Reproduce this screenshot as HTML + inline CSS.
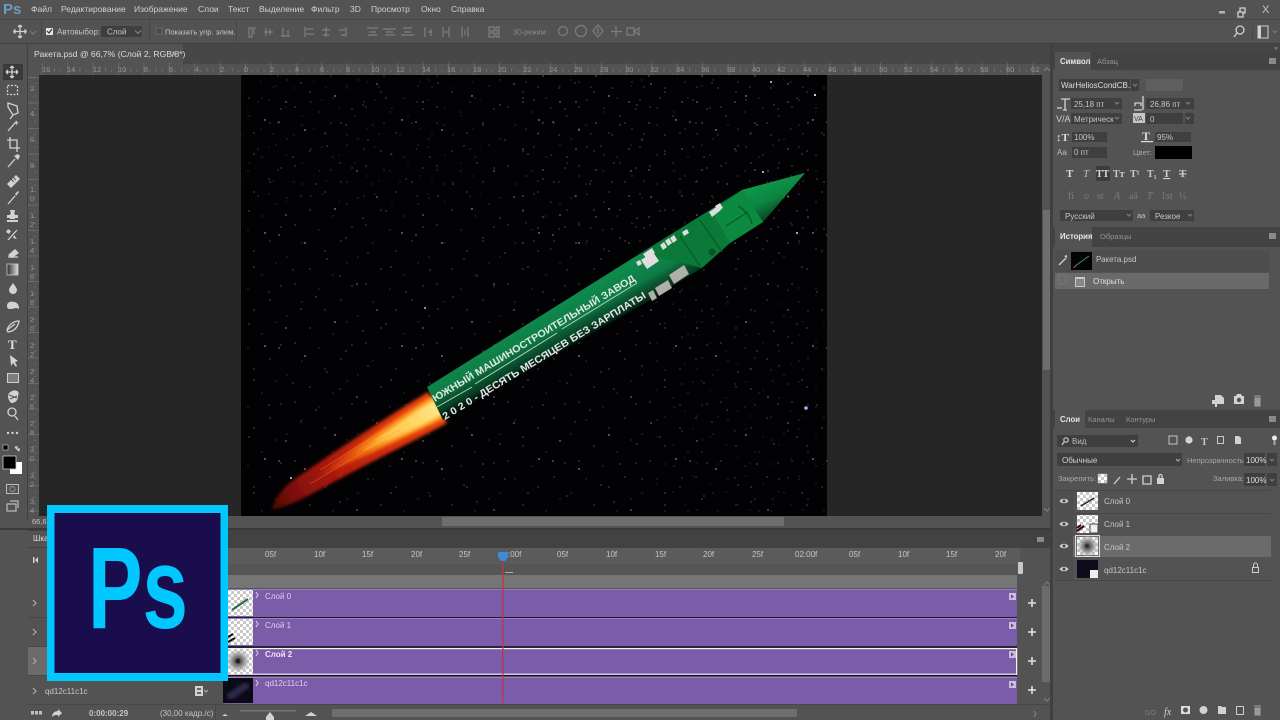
<!DOCTYPE html>
<html lang="ru"><head><meta charset="utf-8"><title>Photoshop</title>
<style>
html,body{margin:0;padding:0;background:#535353;width:1280px;height:720px;overflow:hidden}
svg{display:block;filter:blur(.35px)}
text{font-family:"Liberation Sans","Noto Sans CJK SC",sans-serif;font-size:8px;fill:#c6c6c6}
.m{font-size:8.5px;fill:#d0d0d0}
.d{fill:#8d8d8d;font-size:7.5px}
.r{fill:#949494;font-size:7.5px}
.w{fill:#e6e6e6}
.i{fill:none;stroke:#d2d2d2;stroke-width:1.3}
.f{fill:#d2d2d2;stroke:none}
.g{fill:none;stroke:#7e7e7e;stroke-width:1.2}
.b{fill:#3f3f3f}
</style></head><body>
<svg width="1280" height="720" viewBox="0 0 1280 720" xmlns="http://www.w3.org/2000/svg">
<defs>
<pattern id="s1" width="137" height="113" patternUnits="userSpaceOnUse">
<g fill="#c8c8d2"><circle cx="5" cy="9" r=".6"/><circle cx="19" cy="44" r=".45"/><circle cx="31" cy="17" r=".7"/><circle cx="42" cy="71" r=".5"/><circle cx="53" cy="33" r=".45"/><circle cx="61" cy="96" r=".7"/><circle cx="72" cy="12" r=".5"/><circle cx="83" cy="58" r=".6"/><circle cx="94" cy="27" r=".45"/><circle cx="103" cy="84" r=".6"/><circle cx="117" cy="41" r=".5"/><circle cx="128" cy="7" r=".7"/><circle cx="132" cy="66" r=".45"/><circle cx="12" cy="102" r=".6"/><circle cx="27" cy="83" r=".45"/><circle cx="89" cy="105" r=".5"/><circle cx="112" cy="98" r=".45"/><circle cx="66" cy="50" r=".45"/></g>
</pattern>
<pattern id="s2" width="71" height="59" patternUnits="userSpaceOnUse">
<g fill="#6f6f7c"><circle cx="3" cy="21" r=".5"/><circle cx="11" cy="48" r=".6"/><circle cx="18" cy="7" r=".5"/><circle cx="26" cy="33" r=".6"/><circle cx="35" cy="53" r=".5"/><circle cx="41" cy="15" r=".6"/><circle cx="49" cy="39" r=".5"/><circle cx="57" cy="5" r=".6"/><circle cx="63" cy="27" r=".5"/><circle cx="68" cy="50" r=".6"/></g>
</pattern>
<pattern id="s3" width="53" height="47" patternUnits="userSpaceOnUse">
<g fill="#9a9aa6"><circle cx="4" cy="6" r=".5"/><circle cx="13" cy="29" r=".6"/><circle cx="21" cy="14" r=".45"/><circle cx="29" cy="41" r=".55"/><circle cx="37" cy="22" r=".5"/><circle cx="46" cy="8" r=".6"/><circle cx="49" cy="35" r=".45"/><circle cx="8" cy="40" r=".5"/></g>
</pattern>
<pattern id="ch" width="6" height="6" patternUnits="userSpaceOnUse"><rect width="6" height="6" fill="#fff"/><rect width="3" height="3" fill="#c8c8c8"/><rect x="3" y="3" width="3" height="3" fill="#c8c8c8"/></pattern>
<pattern id="tk" width="25.4" height="12" patternUnits="userSpaceOnUse" x="245"><path d="M.5 1V12M12.7 8V12M6.35 10V12M19 10V12" stroke="#757575" stroke-width=".7"/></pattern>
<pattern id="tv" width="12" height="25.5" patternUnits="userSpaceOnUse" y="77"><path d="M1 .5H12M8 12.7H12M10 6.3H12M10 19H12" stroke="#757575" stroke-width=".7"/></pattern>
<linearGradient id="fl" gradientUnits="userSpaceOnUse" x1="440" y1="405" x2="272" y2="508"><stop offset="0" stop-color="#e8470c"/><stop offset=".3" stop-color="#d8320a"/><stop offset=".62" stop-color="#b01a08"/><stop offset=".88" stop-color="#7a0f07"/><stop offset="1" stop-color="#4a0805"/></linearGradient>
<linearGradient id="fm" gradientUnits="userSpaceOnUse" x1="440" y1="407" x2="300" y2="490"><stop offset="0" stop-color="#ffa020"/><stop offset=".5" stop-color="#f4700f"/><stop offset="1" stop-color="#d8320a" stop-opacity="0"/></linearGradient>
<linearGradient id="fc" gradientUnits="userSpaceOnUse" x1="440" y1="407" x2="345" y2="465"><stop offset="0" stop-color="#ffe888"/><stop offset=".55" stop-color="#ffc040"/><stop offset="1" stop-color="#f58a18" stop-opacity="0"/></linearGradient>
<linearGradient id="rk" gradientUnits="userSpaceOnUse" x1="528" y1="322" x2="548" y2="358"><stop offset="0" stop-color="#0f8a4c"/><stop offset=".48" stop-color="#0d7b46"/><stop offset=".62" stop-color="#0b5e36"/><stop offset=".85" stop-color="#083f25"/><stop offset="1" stop-color="#04160d"/></linearGradient>
<linearGradient id="ns" gradientUnits="userSpaceOnUse" x1="748" y1="186" x2="764" y2="222"><stop offset="0" stop-color="#0e9a4c"/><stop offset=".55" stop-color="#0c8440"/><stop offset="1" stop-color="#06401f"/></linearGradient>
<radialGradient id="sm"><stop offset="0" stop-color="#333"/><stop offset=".5" stop-color="#8a8a8a"/><stop offset="1" stop-color="#bbb" stop-opacity=".3"/></radialGradient>
<linearGradient id="gr"><stop offset="0" stop-color="#2b2b2b"/><stop offset="1" stop-color="#ddd"/></linearGradient>
<filter id="bl"><feGaussianBlur stdDeviation="1.6"/></filter>
<filter id="bl2"><feGaussianBlur stdDeviation="3"/></filter>
<filter id="sf"><feGaussianBlur stdDeviation=".35"/></filter>
</defs>

<rect width="1280" height="720" fill="#535353"/>

<!-- menu bar -->
<text x="3" y="14" style="font-size:15px;font-weight:bold;fill:#6f9bbd">Ps</text>
<text class="m" x="31" y="12">Файл</text><text class="m" x="61" y="12">Редактирование</text><text class="m" x="134" y="12">Изображение</text><text class="m" x="198" y="12">Слои</text><text class="m" x="228" y="12">Текст</text><text class="m" x="259" y="12">Выделение</text><text class="m" x="311" y="12">Фильтр</text><text class="m" x="350" y="12">3D</text><text class="m" x="371" y="12">Просмотр</text><text class="m" x="421" y="12">Окно</text><text class="m" x="451" y="12">Справка</text>
<rect x="1219" y="11" width="6" height="2.5" fill="#b5b5b5"/>
<path class="i" d="M1238 12h5v5h-5zM1240 12V8h5v5h-2" stroke-width="1"/>
<text x="1262" y="13" style="font-size:11px;fill:#c8c8c8">X</text>
<rect y="19" width="1280" height="1" fill="#484848"/>

<!-- options bar -->
<rect y="20" width="1280" height="24" fill="#535353"/>
<rect y="43" width="1280" height="1" fill="#3e3e3e"/>
<path class="i" d="M20 25v13M13.500 31.500h13M20 25l-2 2M20 25l2 2M20 38l-2-2M20 38l2-2M13.500 31.500l2-2M13.500 31.500l2 2M26.500 31.500l-2-2M26.500 31.500l-2 2"/>
<path class="g" d="M30 31l3 3 3-3"/>
<rect x="41" y="20" width="1" height="22" fill="#474747"/>
<rect x="46" y="28" width="7" height="7" fill="#e4e4e4"/><path d="M47 31l2 2 3-4" stroke="#333" fill="none" stroke-width="1.2"/>
<text x="57" y="34.500">Автовыбор:</text>
<rect x="101" y="26" width="41" height="11" class="b"/><text x="107" y="34.500">Слой</text><path class="g" d="M135 30.500l3 3 3-3"/>
<rect x="149" y="20" width="1" height="22" fill="#474747"/>
<rect x="156" y="28" width="6" height="6" fill="#4a4a4a" stroke="#666"/>
<text x="165" y="34.500" style="font-size:7.600px">Показать упр. элем.</text>
<rect x="236" y="20" width="1" height="22" fill="#474747"/>
<g class="g">
<path d="M248 28h8M249 29v8h3v-8M254 29v5"/><path d="M264 32h9M266 28v8M270 29v6"/><path d="M281 36h9M283 28v8M288 30v6"/>
<path d="M305 27v10M306 29h7M306 34h8"/><path d="M326 27v10M322 30h8M323 35h6"/><path d="M346 27v10M339 30h7M341 35h5"/>
<path d="M367 28h11M369 32h7M368 35h9"/><path d="M383 29h13M386 32h7M385 35h10"/><path d="M401 35h13M404 32h7M403 28h9"/>
<path d="M425 27v10M431 29v7M428 32h4"/><path d="M443 27v10M449 27v10M444 32h4"/><path d="M462 27v10M468 27v10M465 30v5"/>
<path d="M489 27h5v4h-5zM489 33h5v4h-5zM496 27h3v4h-3zM496 33h3v4h-3z"/>
</g>
<text class="d" x="513" y="34.500" style="font-size:7px">3D-режим:</text>
<g class="g">
<circle cx="563" cy="31" r="4.500"/><circle cx="581" cy="31" r="5.500"/><path d="M598 25l5 6-5 6-5-6zM598 28v6"/><path d="M616 26v11M611 31.500h11"/><path d="M627 28h7v7h-7zM634 31l5-3v7z"/>
</g>
<circle cx="1240" cy="30" r="4" class="i"/><path class="i" d="M1237 33l-3 4"/>
<rect x="1252" y="26" width="1" height="14" fill="#474747"/>
<rect x="1258" y="26" width="10" height="12" fill="none" stroke="#d2d2d2"/><rect x="1258" y="26" width="3" height="12" fill="#d2d2d2"/><path class="g" d="M1273 30.500l2 2 2-2"/>

<!-- document tab row -->
<rect y="44" width="1053" height="20" fill="#474747"/>
<rect x="0" y="44" width="27" height="20" fill="#474747"/>
<rect x="27" y="44" width="156" height="20" fill="#535353"/>
<text x="34" y="57" style="font-size:8.6px;fill:#dcdcdc">Ракета.psd @ 66,7% (Слой 2, RGB/8*)</text>
<text x="171" y="57" style="font-size:9px;fill:#bbb">×</text>
<text x="4" y="50" style="font-size:6px;fill:#aaa">»</text>

<!-- rulers -->
<rect x="28" y="64" width="1014" height="11" fill="#535353"/>
<rect x="39" y="63" width="1003" height="12" fill="url(#tk)"/>
<g>
<text class="r" x="42" y="72">16</text><text class="r" x="67" y="72">14</text><text class="r" x="93" y="72">12</text><text class="r" x="118" y="72">10</text><text class="r" x="144" y="72">8</text><text class="r" x="169" y="72">6</text><text class="r" x="195" y="72">4</text><text class="r" x="220" y="72">2</text><text class="r" x="244" y="72">0</text><text class="r" x="270" y="72">2</text><text class="r" x="295" y="72">4</text><text class="r" x="320" y="72">6</text><text class="r" x="346" y="72">8</text><text class="r" x="371" y="72">10</text><text class="r" x="396" y="72">12</text><text class="r" x="422" y="72">14</text><text class="r" x="447" y="72">16</text><text class="r" x="473" y="72">18</text><text class="r" x="498" y="72">20</text><text class="r" x="523" y="72">22</text><text class="r" x="549" y="72">24</text><text class="r" x="574" y="72">26</text><text class="r" x="600" y="72">28</text><text class="r" x="625" y="72">30</text><text class="r" x="650" y="72">32</text><text class="r" x="676" y="72">34</text><text class="r" x="701" y="72">36</text><text class="r" x="727" y="72">38</text><text class="r" x="752" y="72">40</text><text class="r" x="777" y="72">42</text><text class="r" x="803" y="72">44</text><text class="r" x="828" y="72">46</text><text class="r" x="853" y="72">48</text><text class="r" x="879" y="72">50</text><text class="r" x="904" y="72">52</text><text class="r" x="930" y="72">54</text><text class="r" x="955" y="72">56</text><text class="r" x="980" y="72">58</text><text class="r" x="1006" y="72">60</text><text class="r" x="1031" y="72">62</text>
</g>
<rect x="27" y="64" width="12" height="452" fill="#535353"/>
<rect x="27" y="75" width="12" height="441" fill="url(#tv)"/>
<g>
<text class="r" x="30" y="91">2</text><text class="r" x="30" y="116">4</text><text class="r" x="30" y="142">6</text><text class="r" x="30" y="168">8</text><text class="r" x="30" y="192">1</text><text class="r" x="30" y="201">0</text><text class="r" x="30" y="218">1</text><text class="r" x="30" y="227">2</text><text class="r" x="30" y="244">1</text><text class="r" x="30" y="253">4</text><text class="r" x="30" y="270">1</text><text class="r" x="30" y="279">6</text><text class="r" x="30" y="296">1</text><text class="r" x="30" y="305">8</text><text class="r" x="30" y="322">2</text><text class="r" x="30" y="331">0</text><text class="r" x="30" y="348">2</text><text class="r" x="30" y="357">2</text><text class="r" x="30" y="374">2</text><text class="r" x="30" y="383">4</text><text class="r" x="30" y="400">2</text><text class="r" x="30" y="409">6</text><text class="r" x="30" y="426">2</text><text class="r" x="30" y="435">8</text><text class="r" x="30" y="452">3</text><text class="r" x="30" y="461">0</text><text class="r" x="30" y="478">3</text><text class="r" x="30" y="487">2</text><text class="r" x="30" y="504">3</text><text class="r" x="30" y="513">4</text>
</g>

<!-- canvas -->
<rect x="39" y="75" width="1003" height="441" fill="#262626"/>
<rect x="241" y="75" width="586" height="441" fill="#020204"/>
<rect x="241" y="75" width="586" height="441" fill="url(#s2)"/>
<rect x="241" y="75" width="586" height="441" fill="url(#s1)"/>
<rect x="520" y="75" width="307" height="180" fill="url(#s3)"/>
<rect x="241" y="75" width="240" height="130" fill="url(#s3)" opacity=".55"/>
<rect x="650" y="280" width="177" height="236" fill="url(#s3)" opacity=".55"/>
<g fill="#dde"><circle cx="806" cy="408" r="1.800" fill="#aab0ff"/><circle cx="425" cy="308" r="1.200" fill="#8a8aa0"/><circle cx="291" cy="478" r="1"/><circle cx="283" cy="495" r="1"/><circle cx="771" cy="82" r="1"/><circle cx="815" cy="95" r="1.100"/><circle cx="763" cy="172" r="1"/><circle cx="797" cy="233" r="1"/></g>

<!-- flame -->
<g filter="url(#bl)"><path d="M428 392C395 412 340 448 296 478C283 487 275 498 272 509C286 508 305 498 330 484C370 462 420 438 447 423Z" fill="url(#fl)"/></g>
<path d="M432 396C400 416 360 442 318 476C360 460 415 432 445 418Z" fill="url(#fm)" filter="url(#bl)"/>
<path d="M434 400C410 414 385 432 352 455C385 444 420 428 443 414Z" fill="url(#fc)" filter="url(#bl)"/>
<g stroke="#ffdc70" stroke-width=".7" opacity=".45" filter="url(#sf)"><path d="M438 404L375 440M436 410L365 450"/></g>
<g stroke="#ff9a30" stroke-width=".7" opacity=".5" filter="url(#sf)"><path d="M410 414L320 470M400 430L310 484"/></g>

<!-- rocket -->
<path d="M427 387L633 258L742 190L805 173L763 222L730 243L702 268L650 300L443 420Z" fill="url(#rk)"/>
<path d="M742 190L805 173L763 222Z" fill="url(#ns)"/>
<path d="M640 254L742 190L763 222L730 243L702 268L680 262Z" fill="#0b7a38"/>
<path d="M742 190L763 222L730 243L712 212Z" fill="#0c8a40"/>
<path d="M738 206C745 210 750 216 752 224M726 226L748 212M700 220L722 252M680 236L700 266" stroke="#085a28" stroke-width="1.300" fill="none"/>
<circle cx="712" cy="252" r="3.500" fill="#085428"/>
<g fill="#dedede">
<path d="M709 212l9-6 3 4-9 7zM715 206l5-3 3 5-5 3z"/>
<path d="M682 232l5-3 2 4-5 3z"/><path d="M660 245l4-3 3 5-4 3zM665 241l4-3 3 5-4 3zM670 238l4-3 3 5-4 3z"/>
<path d="M636 262l4-2 2 4-4 2z"/><path d="M643 254l9-6 3 5-9 5z"/><path d="M641 260l12-8 6 9-12 8z"/>
</g>
<g fill="#b0b0a8"><path d="M669 275l15-10 5 9-15 10z"/><path d="M655 288l13-8 4 8-13 8z"/><path d="M648 293l5-3 4 8-5 3z"/></g>
<g stroke="#bcd4c4" stroke-width=".9" fill="none"><path d="M437 407L472 387M475 384L557 333M562 329L637 283"/></g>
<text transform="translate(435 402) rotate(-31.200)" textLength="235" lengthAdjust="spacingAndGlyphs" style="font-size:10px;font-weight:bold;fill:#dfe8e0">ЮЖНЫЙ МАШИНОСТРОИТЕЛЬНЫЙ ЗАВОД</text>
<text transform="translate(445 420) rotate(-31.300)" textLength="236" lengthAdjust="spacingAndGlyphs" style="font-size:10px;font-weight:bold;fill:#e6e6e6">2 0 2 0 - ДЕСЯТЬ МЕСЯЦЕВ БЕЗ ЗАРПЛАТЫ</text>

<!-- canvas scrollbars -->
<rect x="1042" y="64" width="11" height="466" fill="#535353"/>
<rect x="1043" y="210" width="7" height="160" fill="#6e6e6e"/>
<path class="g" d="M1044 71l3-3 3 3M1044 508l3 3 3-3"/>
<rect x="28" y="516" width="1022" height="14" fill="#535353"/>
<text x="32" y="524" style="font-size:7.500px">66,67</text>
<rect x="442" y="517" width="342" height="9" fill="#6e6e6e"/>
<rect x="0" y="44" width="27" height="476" fill="#535353"/>
<rect x="27" y="44" width="1" height="476" fill="#414141"/>
<rect x="0" y="528" width="1053" height="2" fill="#3a3a3a"/>

<!-- toolbar -->
<rect x="3" y="64" width="20" height="16" fill="#3a3a3a"/>
<path class="i" d="M12 66v12M6 72h12M12 66l-2 2M12 66l2 2M12 78l-2-2M12 78l2-2M6 72l2-2M6 72l2 2M18 72l-2-2M18 72l-2 2"/>
<rect x="7.500" y="85.500" width="10" height="9" class="i" stroke-dasharray="2 1.500"/>
<path class="i" d="M8 103l9 3 1 7-5 2-5-8zM13 115l-3 4"/>
<path class="i" stroke-width="2" d="M8 131l7-8"/><path class="f" d="M16 120l1 2 2 .5-2 1-.5 2-1-2-2-.5 2-1z"/>
<path class="i" stroke-width="1.800" d="M10 137v11h10M7 140h10v12"/>
<path class="i" stroke-width="2.200" d="M8 167l7-8"/><path class="f" d="M14 156l4-2 2 2-2 4z"/>
<path class="f" d="M7 184l9-9 4 4-9 9z"/><path d="M11 179l3 3M13 177l3 3" stroke="#555"/>
<path class="i" stroke-width="2" d="M8 204l7-8"/><path class="f" d="M15 194l3-3 1 1-3 4z"/>
<path class="f" d="M10 210h5l-1 5h4v3H7v-3h4z"/><rect x="10" y="214" width="5" height="5" class="f"/><rect x="7" y="220" width="11" height="2" class="f"/>
<path class="i" stroke-width="1.800" d="M8 240l9-10"/><path class="f" d="M8 229l3 2-2 3-3-2zM17 239l-4-1 1-3z"/>
<path class="f" d="M8 255l7-6 4 4-7 5z"/><path class="i" d="M8 257h10"/>
<rect x="7" y="264" width="11" height="11" fill="url(#gr)" stroke="#ccc" stroke-width=".8"/>
<path class="f" d="M13 283c2 3 4 5 4 7a4 4 0 0 1-8 0c0-2 2-4 4-7z"/>
<path class="f" d="M7 306c0-4 4-5 7-4 3 0 5 3 5 6 0 1-1 1-2 0-2 0-4 1-7 1-2 0-3-1-3-3z"/>
<path class="i" d="M7 330c2-6 7-9 12-9-1 6-4 10-11 11zM7 330l8-6"/>
<text x="8" y="349" style="font-size:13px;font-family:'Liberation Serif';font-weight:bold;fill:#ddd">T</text>
<path class="f" d="M10 355l1 11 2-3 3 4 1-1-2-4 3-1z"/>
<rect x="7.500" y="373.500" width="11" height="9" fill="#7d7d7d" stroke="#cfcfcf"/>
<path class="f" d="M8 396c0-4 6-7 9-5 3 1 1 4 1 6 0 3-3 6-6 6-2 0-4-4-4-7z"/><path d="M9 395l8 3M10 399l7-3" stroke="#555"/>
<circle cx="12" cy="412" r="4" class="i"/><path class="i" stroke-width="1.800" d="M15 416l3 4"/>
<circle cx="8" cy="433" r="1.200" class="f"/><circle cx="12.500" cy="433" r="1.200" class="f"/><circle cx="17" cy="433" r="1.200" class="f"/>
<rect x="3" y="445" width="5" height="5" fill="#000" stroke="#ccc" stroke-width=".6"/><path class="i" stroke-width="1" d="M15 447l4 4M15 447h3M19 451v-3"/>
<rect x="10" y="462" width="12" height="12" fill="#fff"/>
<rect x="3" y="456" width="13" height="13" fill="#000" stroke="#ccc" stroke-width=".8"/>
<rect x="6.500" y="484.500" width="12" height="9" fill="none" stroke="#bbb"/><circle cx="12.500" cy="489" r="2.500" fill="none" stroke="#999"/>
<path class="g" d="M10 501h8v7M7 504h9v7H7z" style="stroke:#bbb"/>

<!-- timeline -->
<rect x="28" y="530" width="1025" height="18" fill="#424242"/>
<rect x="28" y="531" width="30" height="16" fill="#535353"/>
<text x="33" y="541" style="font-size:8px;fill:#ddd">Шка</text>
<rect x="1037" y="537" width="7" height="5" fill="#8a8a8a"/>
<rect x="28" y="548" width="1025" height="172" fill="#535353"/>
<path class="f" d="M33 557h1.500v6H33zM35 560l3-3v6z"/>
<rect x="228" y="548" width="792" height="16" fill="#5b5b5b"/>
<rect x="228" y="564" width="792" height="11" fill="#565656"/>
<g>
<text x="265" y="557">05f</text><text x="314" y="557">10f</text><text x="362" y="557">15f</text><text x="411" y="557">20f</text><text x="459" y="557">25f</text><text x="508" y="557">:00f</text><text x="557" y="557">05f</text><text x="606" y="557">10f</text><text x="655" y="557">15f</text><text x="703" y="557">20f</text><text x="752" y="557">25f</text><text x="795" y="557">02:00f</text><text x="849" y="557">05f</text><text x="898" y="557">10f</text><text x="946" y="557">15f</text><text x="995" y="557">20f</text>
</g>
<rect x="228" y="575" width="789" height="13" fill="#757575"/>
<rect x="505" y="572" width="8" height="1" fill="#aaa"/>
<rect x="1018" y="562" width="5" height="12" rx="1" fill="#c8c8c8"/>
<rect x="28" y="588" width="200" height="29" fill="#535353"/>
<rect x="28" y="646" width="200" height="29" fill="#6b6b6b"/>
<rect x="28" y="617" width="200" height="1" fill="#474747"/><rect x="28" y="646" width="200" height="1" fill="#474747"/><rect x="28" y="675" width="200" height="1" fill="#474747"/><rect x="28" y="704" width="1025" height="1" fill="#474747"/>
<g class="g" style="stroke:#aaa"><path d="M33 600l3 3-3 3M33 629l3 3-3 3M33 658l3 3-3 3M33 688l3 3-3 3"/></g>
<text x="45" y="694" style="font-size:8px">qd12c11c1c</text>
<path class="f" d="M195 686h8v10h-8z"/><path d="M197 689h4M197 693h4" stroke="#444" stroke-width="1.500"/><path class="g" d="M204 690l2 2 2-2" style="stroke:#aaa"/>

<!-- clips -->
<g fill="#7b5ca9">
<rect x="223" y="589" width="794" height="28" rx="2"/><rect x="223" y="618" width="794" height="28" rx="2"/><rect x="223" y="648" width="794" height="27" rx="2"/><rect x="223" y="677" width="794" height="27" rx="2"/>
</g>
<rect x="223" y="589" width="794" height="1" fill="#9a80c4"/><rect x="223" y="618" width="794" height="1" fill="#9a80c4"/>
<rect x="223" y="677" width="794" height="1" fill="#9a80c4"/>
<rect x="223" y="617" width="794" height="1" fill="#221a2e"/><rect x="223" y="646" width="794" height="2" fill="#2a2236"/>
<rect x="228" y="648" width="789" height="1.200" fill="#f2f2f2"/><rect x="228" y="673.500" width="789" height="1.500" fill="#d7c4ee"/><rect x="223" y="675" width="794" height="1" fill="#111"/>
<rect x="1016" y="648" width="1.200" height="27" fill="#f2f2f2"/>
<rect x="228" y="590" width="25" height="26" fill="url(#ch)"/><rect x="228" y="619" width="25" height="26" fill="url(#ch)"/><rect x="228" y="649" width="25" height="25" fill="url(#ch)"/><rect x="223" y="678" width="30" height="25" fill="#0b0b18"/>
<path d="M232 610l16-11" stroke="#2a6a40" stroke-width="2"/><path d="M228 642l7-4M228 637l5-3" stroke="#111" stroke-width="2"/>
<circle cx="238" cy="661" r="11" fill="url(#sm)"/><circle cx="238" cy="661" r="2.500" fill="#222"/>
<path d="M228 698l20-14" stroke="#2b2b4a" stroke-width="7" filter="url(#bl)"/>
<g class="g" style="stroke:#cdbbe6"><path d="M256 592l2 3-2 3M256 621l2 3-2 3M256 650l2 3-2 3M256 680l2 3-2 3"/></g>
<text x="265" y="599" style="fill:#ddd0f0">Слой 0</text><text x="265" y="628" style="fill:#ddd0f0">Слой 1</text><text x="265" y="657" style="font-weight:bold;fill:#eee4fa">Слой 2</text><text x="265" y="686" style="fill:#ddd0f0">qd12c11c1c</text>
<g fill="#cdbbe6"><rect x="1009" y="593" width="7" height="7"/><rect x="1009" y="622" width="7" height="7"/><rect x="1009" y="651" width="7" height="7"/><rect x="1009" y="681" width="7" height="7"/></g>
<g fill="#555"><path d="M1011 594.500l3 2-3 2zM1011 623.500l3 2-3 2zM1011 652.500l3 2-3 2zM1011 682.500l3 2-3 2z"/></g>
<g stroke="#e2e2e2" stroke-width="1.600"><path d="M1028 603h8M1032 599v8M1028 632h8M1032 628v8M1028 661h8M1032 657v8M1028 690h8M1032 686v8"/></g>
<rect x="1042" y="586" width="8" height="96" fill="#6b6b6b"/>
<path class="g" d="M1044 585l3-3 3 3M1044 698l3 3 3-3"/>
<rect x="502.200" y="556" width="1.300" height="147" fill="#c0334a"/>
<path d="M498 552h10v5l-3 4h-4l-3-4z" fill="#3f8bd8"/>

<!-- timeline bottom -->
<g fill="#c0c0c0"><rect x="31" y="711" width="3" height="3.500"/><rect x="35" y="711" width="3" height="3.500"/><rect x="39" y="711" width="3" height="3.500"/></g>
<path class="f" d="M52 717c0-4 3-6 6-6v-2l4 4-4 4v-2c-3 0-4 0-6 2z"/>
<text x="89" y="716" style="font-weight:bold;font-size:8px">0:00:00:29</text>
<text x="160" y="716" style="font-size:8px">(30,00 кадр./с)</text>
<rect x="215" y="705" width="1" height="15" fill="#474747"/>
<path class="f" d="M222 716l3-2 3 2z"/>
<rect x="240" y="710" width="56" height="1.500" fill="#777"/>
<path class="f" d="M270 712l4 5v3h-8v-3z"/>
<path class="f" d="M305 716l6-4 6 4z"/>
<rect x="332" y="709" width="465" height="8" fill="#6e6e6e"/>
<path class="g" d="M1034 711l2 3-2 3"/>

<!-- right dock -->
<rect x="1050" y="44" width="3" height="676" fill="#404040"/>
<rect x="1053" y="44" width="227" height="676" fill="#535353"/>
<rect x="1053" y="44" width="227" height="8" fill="#454545"/>
<text x="1274" y="50" style="font-size:6px;fill:#aaa">»</text>
<rect x="1053" y="52" width="227" height="18" fill="#434343"/>
<rect x="1055" y="52" width="36" height="18" fill="#535353"/>
<text x="1060" y="64" class="w" style="font-weight:bold;font-size:7.800px">Символ</text><text x="1097" y="64" class="r">Абзац</text>
<rect x="1269" y="58" width="7" height="6" fill="#8a8a8a"/>
<rect x="1059" y="79" width="71" height="12" class="b"/><text x="1061" y="88" style="font-size:8px;fill:#dedede">WarHeliosCondCB...</text>
<rect x="1131" y="79" width="8" height="12" class="b"/><path class="g" d="M1133 84l2 2 2-2"/>
<rect x="1146" y="79" width="37" height="12" fill="#5e5e5e"/>
<path class="i" stroke-width="1" d="M1057 108h5M1061 99h9M1065 99v11M1063 110h4"/>
<rect x="1071" y="98" width="42" height="11" class="b"/><rect x="1113" y="98" width="9" height="11" class="b"/><text x="1074" y="107">25,18 пт</text><path class="g" d="M1115 102l2 2 2-2"/>
<path class="i" stroke-width="1" d="M1135 106v-3h6v3M1143 96v14M1134 110h8"/>
<rect x="1146" y="98" width="37" height="11" class="b"/><rect x="1183" y="98" width="11" height="11" class="b"/><text x="1150" y="107">26,86 пт</text><path class="g" d="M1186 102l2 2 2-2"/>
<text x="1056" y="122" style="font-size:9px;fill:#ccc">V/A</text>
<rect x="1071" y="113" width="42" height="11" class="b"/><rect x="1113" y="113" width="9" height="11" class="b"/><text x="1074" y="122">Метрическ</text><path class="g" d="M1115 117l2 2 2-2"/>
<rect x="1133" y="113" width="12" height="10" fill="#c5c5c5"/><text x="1134" y="121" style="font-size:7px;fill:#444">VA</text>
<rect x="1146" y="113" width="37" height="11" class="b"/><rect x="1185" y="113" width="9" height="11" class="b"/><text x="1150" y="122">0</text><path class="g" d="M1186 117l2 2 2-2"/>
<text x="1056" y="141" style="font-size:11px;font-weight:bold;fill:#ddd;font-family:'Liberation Serif'">↕T</text>
<rect x="1072" y="132" width="35" height="10" class="b"/><text x="1074" y="140">100%</text>
<text x="1142" y="140" style="font-size:12px;font-weight:bold;fill:#ddd;font-family:'Liberation Serif'">T</text><rect x="1141" y="141" width="12" height="1.200" fill="#ddd"/>
<rect x="1155" y="132" width="36" height="10" class="b"/><text x="1157" y="140">95%</text>
<text x="1057" y="155" style="font-size:8px;fill:#bbb">Аа</text>
<rect x="1072" y="147" width="35" height="11" class="b"/><text x="1074" y="155">0 пт</text>
<text x="1133" y="155" class="d" style="fill:#a8a8a8">Цвет:</text>
<rect x="1155" y="146" width="37" height="13" fill="#000"/>
<g>
<rect x="1096" y="166" width="14" height="15" fill="#3c3c3c"/>
<text x="1066" y="177" style="font-size:11px;font-weight:bold;fill:#ddd;font-family:'Liberation Serif'">T</text><text x="1083" y="177" style="font-size:11px;font-style:italic;fill:#bbb;font-family:'Liberation Serif'">T</text><text x="1096" y="177" style="font-size:10px;font-weight:bold;fill:#ddd;font-family:'Liberation Serif'">TT</text><text x="1113" y="177" style="font-size:10px;font-weight:bold;fill:#ccc;font-family:'Liberation Serif'">Tт</text><text x="1130" y="177" style="font-size:10px;font-weight:bold;fill:#ccc;font-family:'Liberation Serif'">T¹</text><text x="1147" y="177" style="font-size:10px;font-weight:bold;fill:#ccc;font-family:'Liberation Serif'">T₁</text><text x="1163" y="177" style="font-size:11px;font-weight:bold;fill:#ccc;text-decoration:underline;font-family:'Liberation Serif'">T</text><text x="1179" y="177" style="font-size:11px;font-weight:bold;fill:#ccc;text-decoration:line-through;font-family:'Liberation Serif'">T</text>
<text x="1068" y="199" style="font-size:10px;fill:#7d7d7d;font-family:'Liberation Serif'">fi</text><text x="1084" y="199" style="font-size:10px;font-style:italic;fill:#7d7d7d;font-family:'Liberation Serif'">o</text><text x="1097" y="199" style="font-size:10px;fill:#7d7d7d;font-family:'Liberation Serif'">st</text><text x="1114" y="199" style="font-size:10px;font-style:italic;fill:#7d7d7d;font-family:'Liberation Serif'">A</text><text x="1129" y="199" style="font-size:10px;fill:#7d7d7d;font-family:'Liberation Serif'">aā</text><text x="1147" y="199" style="font-size:10px;font-style:italic;fill:#7d7d7d;font-family:'Liberation Serif'">T</text><text x="1161" y="199" style="font-size:10px;fill:#7d7d7d;font-family:'Liberation Serif'">1st</text><text x="1179" y="199" style="font-size:10px;fill:#7d7d7d;font-family:'Liberation Serif'">½</text>
</g>
<rect x="1060" y="210" width="73" height="11" class="b"/><text x="1065" y="219">Русский</text><path class="g" d="M1127 214l2 2 2-2"/>
<text x="1137" y="218" style="font-size:7.500px">aa</text>
<rect x="1150" y="210" width="44" height="11" class="b"/><text x="1155" y="219">Резкое</text><path class="g" d="M1188 214l2 2 2-2"/>

<rect x="1053" y="227" width="227" height="20" fill="#434343"/>
<rect x="1055" y="227" width="37" height="20" fill="#535353"/>
<text x="1060" y="239" class="w" style="font-weight:bold;font-size:7.800px">История</text><text x="1100" y="239" class="r">Образцы</text>
<rect x="1269" y="233" width="7" height="6" fill="#8a8a8a"/>
<rect x="1055" y="250" width="214" height="22" fill="#4e4e4e"/>
<path class="i" stroke-width="1.600" d="M1059 265l7-7"/><path class="f" d="M1064 256l3-1 0 3z"/>
<rect x="1071" y="252" width="21" height="18" fill="#030306"/><path d="M1075 266l14-10" stroke="#3d9a68" stroke-width="1"/><path d="M1073 268l3-2" stroke="#c03020" stroke-width="1.200"/>
<text x="1096" y="262">Ракета.psd</text>
<rect x="1055" y="273" width="214" height="16" fill="#6a6a6a"/>
<rect x="1059" y="275" width="7" height="9" fill="none" stroke="#777"/>
<rect x="1075.500" y="277.500" width="9" height="9" fill="#888" stroke="#c8c8c8"/><rect x="1075" y="277" width="10" height="2" fill="#c8c8c8"/>
<text x="1093" y="284" style="fill:#e2e2e2">Открыть</text>
<path class="f" d="M1212 400h3v-5h6l3 3v6h-7v3h-2v-3h-3z"/>
<path class="f" d="M1234 396h2l1-2h4l1 2h2v8h-10z"/><circle cx="1239" cy="400" r="2.200" fill="#535353"/>
<path d="M1254 396h7M1255 398h5v8h-5z" stroke="#a0a0a0" fill="#999"/>

<!-- layers -->
<rect x="1053" y="410" width="227" height="18" fill="#434343"/>
<rect x="1055" y="410" width="30" height="18" fill="#535353"/>
<text x="1060" y="422" class="w" style="font-weight:bold;font-size:7.800px">Слои</text><text x="1088" y="422" class="r">Каналы</text><text x="1126" y="422" class="r">Контуры</text>
<rect x="1269" y="416" width="7" height="6" fill="#8a8a8a"/>
<rect x="1057" y="435" width="81" height="12" class="b"/><text x="1072" y="444" style="fill:#bbb">Вид</text><circle cx="1066" cy="440" r="2.200" class="g" style="stroke:#ccc"/><path class="g" d="M1064 442l-2 3M1131 440l2 2 2-2" style="stroke:#ccc"/>
<rect x="1169" y="436" width="8" height="8" fill="none" stroke="#c5c5c5"/><circle cx="1189" cy="440" r="3.600" class="f"/><text x="1201" y="445" style="font-size:10px;font-weight:bold;fill:#c8c8c8;font-family:'Liberation Serif'">T</text><rect x="1217.500" y="436.500" width="6" height="7" fill="none" stroke="#c8c8c8"/><path class="f" d="M1235 436h4l2 2v6h-6z"/>
<circle cx="1274.500" cy="438" r="2.500" fill="#eee"/><rect x="1273.500" y="440" width="2" height="5" fill="#aaa"/>
<rect x="1057" y="453" width="125" height="13" class="b"/><text x="1062" y="463" style="fill:#d0d0d0">Обычные</text><path class="g" d="M1176 459l2 2 2-2" style="stroke:#aaa"/>
<text x="1187" y="463" class="r" style="fill:#a8a8a8">Непрозрачность:</text>
<rect x="1244" y="453" width="21" height="13" class="b"/><text x="1246" y="463" style="fill:#ddd">100%</text><rect x="1267" y="453" width="10" height="13" class="b"/><path class="g" d="M1270 459l2 2 2-2"/>
<text x="1058" y="481" class="r" style="fill:#aaa">Закрепить:</text>
<rect x="1098" y="474" width="9" height="9" fill="url(#ch)" stroke="#ccc" stroke-width=".5"/>
<path class="i" stroke-width="1.800" d="M1114 484l6-7"/>
<path class="i" stroke-width="1" d="M1132 474v10M1127 479h10"/>
<path class="i" stroke-width="1" d="M1143 476h8v8h-8z"/>
<rect x="1157" y="478" width="7" height="6" class="f"/><path class="i" stroke-width="1" d="M1159 478v-2a1.500 1.500 0 0 1 3 0v2"/>
<text x="1213" y="481" class="r" style="fill:#aaa">Заливка:</text>
<rect x="1244" y="473" width="21" height="13" class="b"/><text x="1246" y="483" style="fill:#ddd">100%</text><rect x="1267" y="473" width="10" height="13" class="b"/><path class="g" d="M1270 479l2 2 2-2"/>
<rect x="1055" y="490" width="216" height="1" fill="#474747"/>
<rect x="1055" y="536" width="216" height="21" fill="#6b6b6b"/>
<rect x="1055" y="513" width="216" height="1" fill="#474747"/><rect x="1055" y="580" width="216" height="1" fill="#474747"/>
<rect x="1055" y="491" width="18" height="89" fill="#4f4f4f"/>
<g><path d="M1059.500 501c2-3 7-3 9 0-2 3-7 3-9 0z" class="f"/><circle cx="1064" cy="501" r="1.500" fill="#444"/>
<path d="M1059.500 524c2-3 7-3 9 0-2 3-7 3-9 0z" class="f"/><circle cx="1064" cy="524" r="1.500" fill="#444"/>
<path d="M1059.500 546c2-3 7-3 9 0-2 3-7 3-9 0z" class="f"/><circle cx="1064" cy="546" r="1.500" fill="#444"/>
<path d="M1059.500 569c2-3 7-3 9 0-2 3-7 3-9 0z" class="f"/><circle cx="1064" cy="569" r="1.500" fill="#444"/></g>
<rect x="1077" y="492" width="21" height="18" fill="url(#ch)"/><path d="M1081 506l13-8" stroke="#222" stroke-width="1.500"/>
<rect x="1077" y="515" width="21" height="18" fill="url(#ch)"/><path d="M1077 531l7-5M1077 528l4-3" stroke="#300" stroke-width="2"/><rect x="1090" y="524" width="8" height="9" fill="#eee" stroke="#444"/>
<rect x="1075.500" y="535.500" width="24" height="21" fill="none" stroke="#ddd"/><rect x="1077" y="537" width="21" height="18" fill="url(#ch)"/><circle cx="1087.500" cy="546" r="10" fill="url(#sm)"/><circle cx="1087" cy="546" r="2" fill="#333"/>
<rect x="1077" y="560" width="21" height="18" fill="#0c0c1a"/><rect x="1090" y="570" width="8" height="8" fill="#eee"/>
<text x="1104" y="504">Слой 0</text><text x="1104" y="527">Слой 1</text><text x="1104" y="550">Слой 2</text><text x="1104" y="573">qd12c11c1c</text>
<rect x="1252.500" y="567.500" width="6" height="5" fill="none" stroke="#ccc"/><path d="M1253.500 567v-2a2 2 0 0 1 4 0v2" fill="none" stroke="#ccc"/>
<text x="1145" y="715" style="font-size:7px;fill:#7d7d7d">GO</text>
<text x="1164" y="715" style="font-size:10px;font-style:italic;fill:#d0d0d0;font-family:'Liberation Serif'">fx</text>
<rect x="1181" y="706" width="9" height="8" fill="#ddd"/><circle cx="1185.500" cy="710" r="2.500" fill="#555"/>
<circle cx="1203.500" cy="710" r="4" class="f"/>
<path class="f" d="M1218 706h3l1 1h4v7h-8z"/>
<rect x="1236.500" y="706.500" width="7" height="8" fill="none" stroke="#ccc"/>
<path d="M1254 706h7M1255 708h5v7h-5z" stroke="#a0a0a0" fill="#999"/>

<!-- Ps badge -->
<rect x="47" y="505" width="181" height="176" fill="#00c8ff"/>
<rect x="54.500" y="513" width="166" height="160" fill="#190d4d"/>
<text x="88" y="628" textLength="100" lengthAdjust="spacingAndGlyphs" style="font-size:116px;font-weight:bold;fill:#00c8ff">Ps</text>
</svg>
</body></html>
